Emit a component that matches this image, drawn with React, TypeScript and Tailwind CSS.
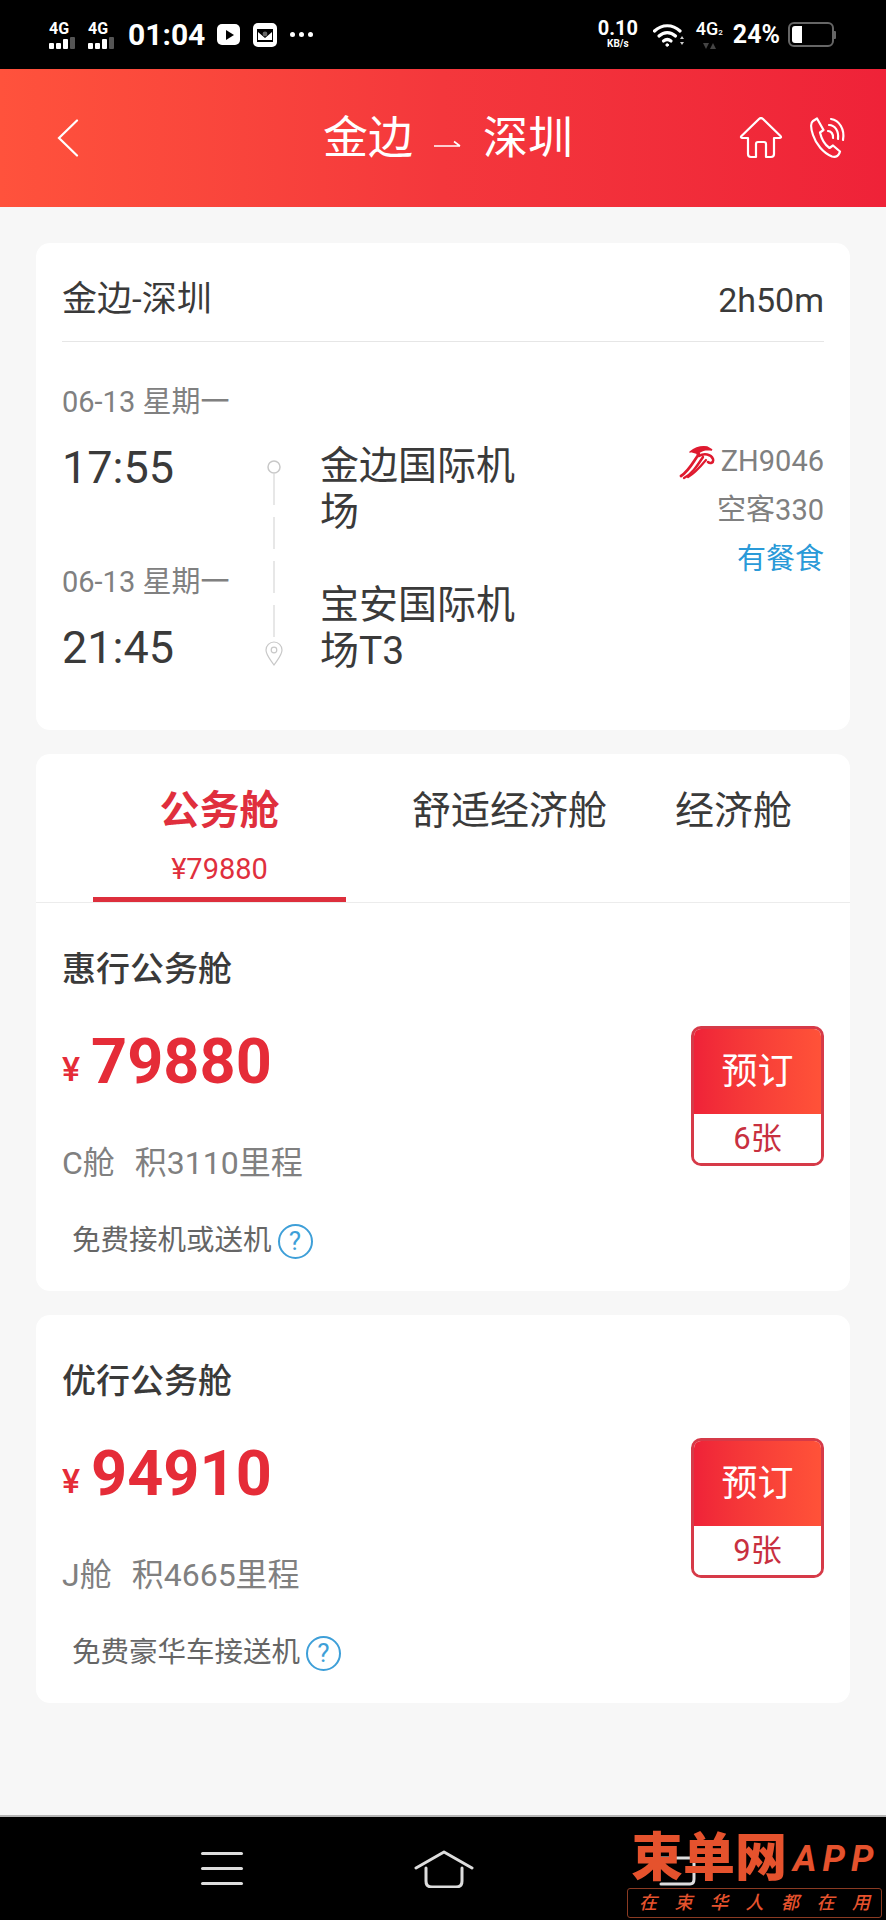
import React from "react";

const fontStack = "font-['Roboto','Noto_Sans_CJK_SC',sans-serif]";

function SignalMark() {
  return (
    <div className="flex w-[29px] flex-col items-start">
      <span className="text-[16px] leading-[15px] font-bold text-white">4G</span>
      <div className="mt-[1px] flex items-end gap-[2px]">
        <span className="h-[6px] w-[5px] rounded-[1px] bg-white" />
        <span className="h-[6px] w-[5px] rounded-[1px] bg-white" />
        <span className="h-[10px] w-[5px] rounded-[1px] bg-white" />
        <span className="h-[12px] w-[5px] rounded-[1px] bg-[#555]" />
      </div>
    </div>
  );
}

function StatusBar() {
  return (
    <div className="flex h-[69px] items-center bg-black pr-[50px] pl-[49px] text-white">
      <SignalMark />
      <div className="ml-[10px]">
        <SignalMark />
      </div>
      <span className="ml-[11px] text-[30px] leading-none font-bold">01:04</span>
      <div className="ml-[12px] flex h-[21px] w-[23px] items-center justify-center rounded-[5px] bg-white">
        <span className="ml-[2px] h-0 w-0 border-y-[5px] border-l-[8px] border-y-transparent border-l-black" />
      </div>
      <svg className="ml-[13px]" width="24" height="24" viewBox="0 0 24 24">
        <rect x="0" y="0" width="24" height="24" rx="5" fill="#fff" />
        <path d="M4 6h16v13H4z" fill="#000" />
        <path d="M5 9l7 6 7-6v8H5z" fill="#fff" />
        <circle cx="12" cy="11" r="2.4" fill="#666" />
      </svg>
      <div className="ml-[13px] flex gap-[4px]">
        <span className="h-[5px] w-[5px] rounded-full bg-white" />
        <span className="h-[5px] w-[5px] rounded-full bg-white" />
        <span className="h-[5px] w-[5px] rounded-full bg-white" />
      </div>

      <div className="ml-auto flex w-[42px] flex-col items-center">
        <span className="text-[20px] leading-[19px] font-bold">0.10</span>
        <span className="text-[10px] leading-[12px] font-bold">KB/s</span>
      </div>
      <svg className="ml-[14px]" width="31" height="24" viewBox="0 0 31 24" fill="none" stroke="#fff" strokeLinecap="round">
        <path d="M1.500 8c7.500-7 18-7 25.500 0" strokeWidth="3.200" />
        <path d="M6 13c5-4.500 11.500-4.500 16.500 0" strokeWidth="3.200" />
        <path d="M10.500 18c2.500-2 5-2 7.500 0" strokeWidth="3.200" />
        <circle cx="14.200" cy="22" r="1.300" fill="#fff" strokeWidth="1" />
        <path d="M29 13l-2 3h4zM29 22l-2-3h4z" fill="#ccc" stroke="none" />
      </svg>
      <div className="relative ml-[11px] flex w-[29px] flex-col items-center">
        <span className="text-[18px] leading-[18px] font-medium">
          4G<span className="text-[8px]">2</span>
        </span>
        <div className="mt-[1px] flex gap-[1px]">
          <span className="h-0 w-0 border-x-[3px] border-t-[6px] border-x-transparent border-t-[#444]" />
          <span className="h-0 w-0 border-x-[3px] border-b-[6px] border-x-transparent border-b-[#444]" />
        </div>
      </div>
      <span className="ml-[9px] text-[25px] leading-none font-bold">24%</span>
      <div className="ml-[8px] flex items-center">
        <div className="flex h-[25px] w-[46px] items-center rounded-[6px] border-2 border-[#666] p-[2px]">
          <div className="h-full w-[10px] rounded-l-[3px] bg-white" />
        </div>
        <span className="h-[8px] w-[2px] rounded-r-[1px] bg-[#666]" />
      </div>
    </div>
  );
}

function TopBar() {
  return (
    <div className="flex h-[138px] items-center bg-gradient-to-r from-[#ff523c] via-[#f4373c] to-[#ef2238] text-white">
      <svg className="ml-[57px]" width="22" height="38" viewBox="0 0 22 38" fill="none" stroke="#fff" strokeWidth="2.200" strokeLinecap="round">
        <path d="M20 1.500L2 19l18 17.500" />
      </svg>
      <div className="ml-[244px] flex items-center text-[45px] leading-none">
        <span>金边</span>
        <svg className="mx-[20px] mt-[12px]" width="30" height="12" viewBox="0 0 30 12" fill="none" stroke="#fff" strokeWidth="1.600">
          <path d="M1 8h26M21 3.500l6 4.500" />
        </svg>
        <span>深圳</span>
      </div>
      <svg className="ml-[166px]" width="44" height="42" viewBox="0 0 44 42" fill="none" stroke="#fff" strokeWidth="2.200" strokeLinejoin="round" strokeLinecap="round">
        <path d="M9 21H3.500c-1.500 0-2-1-1-2L20 2c1.200-1.200 2.800-1.200 4 0l17.500 17c1 1 .5 2-1 2H35v16c0 2-1 3-3 3h-5V27c0-1.500-.5-2-2-2h-6c-1.500 0-2 .5-2 2v13h-5c-2 0-3-1-3-3z" />
      </svg>
      <svg className="ml-[27px]" width="37" height="42" viewBox="0 0 37 42" fill="none" stroke="#fff" strokeWidth="2.200" strokeLinejoin="round" strokeLinecap="round">
        <path d="M7 1.500L3 4C0 6 1 12 3 18c3 9 10 18 19 21.500 3 1 6-.5 7.500-3.500l.5-1.500-7-6-3.500 2.500c-4.500-3-8-9-9.500-15.500l3.500-2.500z" />
        <path d="M18 14c3 0 5.500 3 5 7" />
        <path d="M19 8c6 0 10 6 9 14" />
        <path d="M21 2c8 1 14 10 12 21" />
      </svg>
    </div>
  );
}

function AirlineLogo() {
  return (
    <svg width="36" height="36" viewBox="0 0 36 36" fill="none" stroke="#df1a2f" strokeLinecap="round">
      <path d="M2 32c8-5 12-14 18-22" strokeWidth="2.800" />
      <path d="M5 34c8-4 13-12 19-21" strokeWidth="2.400" />
      <path d="M9 33c7-4 13-11 18-17" strokeWidth="2.200" />
      <path d="M11 8c5-4 11-6 17-5l5 3-5-.5c-4 .5-8 2.500-10 4.500" fill="#df1a2f" strokeWidth="1.500" />
      <path d="M20 12c5-3 12-2 14 3 1 4-3 5-5 3" strokeWidth="2.500" />
    </svg>
  );
}

function RouteLine() {
  return (
    <svg className="mt-[76px]" width="24" height="208" viewBox="0 0 24 208" fill="none" stroke="#c8c8c8">
      <circle cx="12" cy="9" r="6" strokeWidth="1.500" />
      <path d="M12 15v176" stroke="#d8d8d8" strokeWidth="1.200" strokeDasharray="32 12" />
      <path d="M12 207c-4-6-8-10-8-15a8 8 0 0 1 16 0c0 5-4 9-8 15z" strokeWidth="1.200" />
      <circle cx="12" cy="192" r="2.800" strokeWidth="1.200" />
    </svg>
  );
}

function FlightCard() {
  return (
    <div className="rounded-[14px] bg-white px-[26px] pb-[52px]">
      <div className="flex h-[99px] items-center justify-between border-b border-[#e6e6e6] pt-[15px] text-[#3a3a3a]">
        <span className="text-[35px] leading-none">金边-深圳</span>
        <span className="text-[34px] leading-none">2h50m</span>
      </div>
      <div className="flex pt-[40px]">
        <div className="w-[200px]">
          <div className="text-[29px] leading-[40px] text-[#808080]">06-13 星期一</div>
          <div className="mt-[16px] text-[45px] leading-[60px] text-[#3a3a3a]">17:55</div>
          <div className="mt-[64px] text-[29px] leading-[40px] text-[#808080]">06-13 星期一</div>
          <div className="mt-[16px] text-[45px] leading-[60px] text-[#3a3a3a]">21:45</div>
        </div>
        <RouteLine />
        <div className="ml-[34px] w-[200px] pt-[61px] text-[39px] leading-[46px] text-[#3a3a3a]">
          <div>金边国际机场</div>
          <div className="mt-[47px]">宝安国际机场T3</div>
        </div>
        <div className="flex flex-1 flex-col items-end pt-[55px] text-[29px] leading-[49px] text-[#808080]">
          <div className="flex items-center gap-[6px]">
            <AirlineLogo />
            <span>ZH9046</span>
          </div>
          <div>空客330</div>
          <div className="text-[#2a9ad8]">有餐食</div>
        </div>
      </div>
    </div>
  );
}

function CabinTabs() {
  return (
    <div className="flex h-[149px] border-b border-[#ececec]">
      <div className="ml-[57px] flex w-[253px] flex-col items-center border-b-[5px] border-[#dd2f3c] pt-[32px]">
        <span className="text-[40px] leading-[50px] font-bold text-[#e02f3d]">公务舱</span>
        <span className="mt-[15px] text-[29px] leading-[36px] text-[#e02f3d]">¥79880</span>
      </div>
      <span className="ml-[66px] pt-[32px] text-[39px] leading-[50px] text-[#3a3a3a]">舒适经济舱</span>
      <span className="ml-[68px] pt-[32px] text-[39px] leading-[50px] text-[#3a3a3a]">经济舱</span>
    </div>
  );
}

function HelpIcon() {
  return (
    <span className="ml-[6px] flex h-[35px] w-[35px] items-center justify-center rounded-full border-2 border-[#3e9fd8] text-[26px] leading-none text-[#3e9fd8]">
      ?
    </span>
  );
}

interface Fare {
  name: string;
  price: string;
  cabin: string;
  miles: string;
  tickets: string;
  perk: string;
}

function FareRow({ fare }: { fare: Fare }) {
  return (
    <div className="px-[26px] pt-[41px] pb-[30px]">
      <div className="text-[34px] leading-[50px] font-medium text-[#3a3a3a]">{fare.name}</div>
      <div className="flex items-start justify-between">
        <div>
          <div className="mt-[29px] flex h-[76px] items-center">
            <span className="mt-[16px] text-[34px] leading-none font-medium text-[#e52c38]">¥</span>
            <span className="ml-[11px] text-[63px] leading-none font-bold text-[#e52c38]">{fare.price}</span>
          </div>
          <div className="mt-[42px] flex text-[32px] leading-[44px] text-[#808080]">
            <span>{fare.cabin}</span>
            <span className="ml-[20px]">{fare.miles}</span>
          </div>
        </div>
        <div className="mt-[32px] w-[133px] overflow-hidden rounded-[10px] border-[3px] border-[#d63a48]">
          <div className="flex h-[85px] items-center justify-center bg-gradient-to-r from-[#ef2238] to-[#ff5238] text-[36px] leading-none text-white">
            预订
          </div>
          <div className="flex h-[49px] items-center justify-center bg-white text-[31px] leading-none text-[#c8303f]">
            {fare.tickets}
          </div>
        </div>
      </div>
      <div className="mt-[36px] ml-[10px] flex items-center text-[28.5px] leading-[40px] text-[#666]">
        <span>{fare.perk}</span>
        <HelpIcon />
      </div>
    </div>
  );
}

function NavBar() {
  return (
    <div className="relative flex h-[105px] items-center border-t-2 border-[#b5b5b5] bg-black">
      <div className="ml-[201px] flex w-[42px] flex-col gap-[12px]">
        <span className="h-[3px] rounded-full bg-[#ddd]" />
        <span className="h-[3px] rounded-full bg-[#ddd]" />
        <span className="h-[3px] rounded-full bg-[#ddd]" />
      </div>
      <svg className="ml-[171px]" width="60" height="38" viewBox="0 0 60 38" fill="none" stroke="#ddd" strokeWidth="3" strokeLinecap="round" strokeLinejoin="round">
        <path d="M2 18L30 2l28 16M12 18v13c0 4 2 6 6 6h24c4 0 6-2 6-6V18" />
      </svg>
      <svg className="mt-[4px] ml-[183px]" width="42" height="30" viewBox="0 0 42 30" fill="none" stroke="#ddd" strokeWidth="3" strokeLinecap="round">
        <path d="M2 2h32c2 0 3 1 3 3v18c0 3-1 5-4 5H4" />
      </svg>

      {/* watermark sits over the nav icons */}
      <div className="absolute top-[17px] left-[627px] w-[255px]">
        <div className="flex items-center">
          <span className="ml-[4px] text-[52px] leading-[50px] font-black text-[#e5522d]">束单网</span>
          <span className="ml-[6px] text-[36px] leading-none font-bold tracking-[6px] text-[#e5522d] italic">APP</span>
        </div>
        <div className="mt-[4px] flex h-[30px] items-center justify-between rounded-[3px] border border-[#8a3a22] px-[11px] text-[18px] leading-none font-medium text-[#e5522d] italic">
          <span>在</span>
          <span>束</span>
          <span>华</span>
          <span>人</span>
          <span>都</span>
          <span>在</span>
          <span>用</span>
        </div>
      </div>
    </div>
  );
}

const fares: Fare[] = [
  {
    name: "惠行公务舱",
    price: "79880",
    cabin: "C舱",
    miles: "积3110里程",
    tickets: "6张",
    perk: "免费接机或送机",
  },
  {
    name: "优行公务舱",
    price: "94910",
    cabin: "J舱",
    miles: "积4665里程",
    tickets: "9张",
    perk: "免费豪华车接送机",
  },
];

export default function App() {
  return (
    <div className={`flex h-[1920px] w-[886px] flex-col overflow-hidden bg-[#f7f7f7] ${fontStack}`}>
      <StatusBar />
      <TopBar />
      <main className="flex flex-1 flex-col gap-[24px] px-[36px] pt-[36px]">
        <FlightCard />
        <div className="rounded-[14px] bg-white">
          <CabinTabs />
          <FareRow fare={fares[0]} />
        </div>
        <div className="rounded-[14px] bg-white">
          <FareRow fare={fares[1]} />
        </div>
      </main>
      <NavBar />
    </div>
  );
}
